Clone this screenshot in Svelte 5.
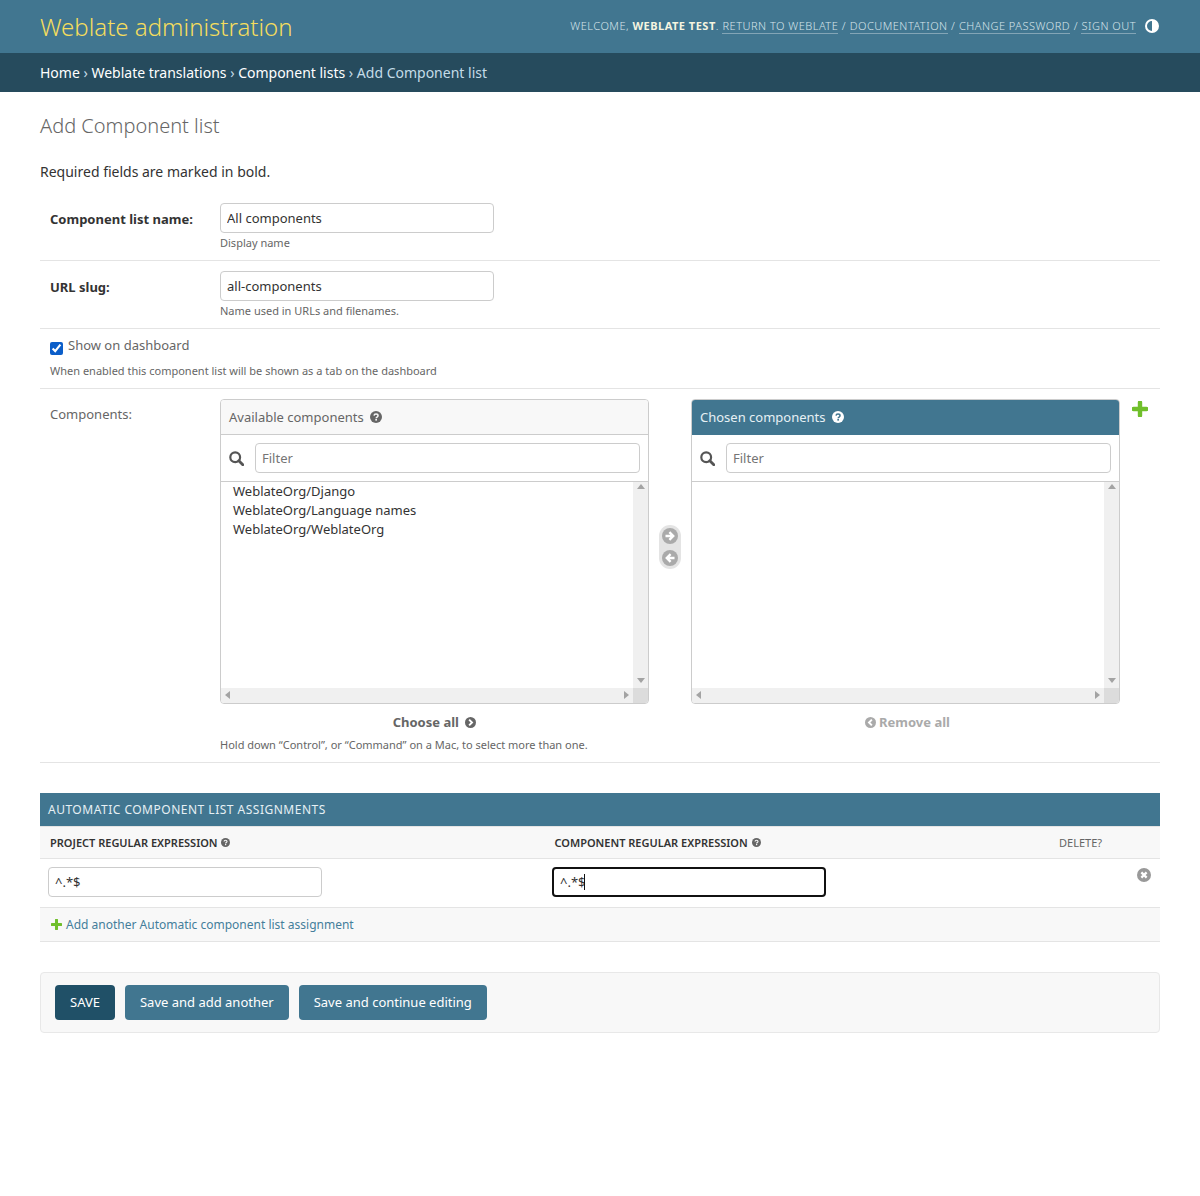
<script>
  const crumbs = ["Home", "Weblate translations", "Component lists"];
  const available = ["WeblateOrg/Django", "WeblateOrg/Language names", "WeblateOrg/WeblateOrg"];
</script>

{#snippet help(size)}
  <svg class="icon" width={size} height={size} viewBox="0 0 16 16">
    <circle cx="8" cy="8" r="8" fill="currentColor" />
    <path d="M5.4 6.2C5.5 4.7 6.6 4 8 4c1.5 0 2.7.8 2.7 2.2 0 1.9-2.4 1.9-2.4 3.4" fill="none" stroke="var(--cut, #fff)" stroke-width="2" />
    <rect x="7.1" y="10.6" width="2.2" height="2.2" fill="var(--cut, #fff)" />
  </svg>
{/snippet}

{#snippet search()}
  <svg class="icon" width="15" height="15" viewBox="0 0 15 15">
    <circle cx="6.2" cy="6.2" r="4.9" fill="none" stroke="#555" stroke-width="2.2" />
    <path d="M9.8 9.8l4 4" stroke="#555" stroke-width="2.8" stroke-linecap="round" />
  </svg>
{/snippet}

{#snippet arrow(dir, size, color)}
  <svg class="icon" width={size} height={size} viewBox="0 0 16 16">
    <circle cx="8" cy="8" r="8" fill={color} />
    {#if dir === "right"}
      <path d="M3.5 8h7M7.4 4.2L11.2 8l-3.8 3.8" fill="none" stroke="#fff" stroke-width="2.4" />
    {:else}
      <path d="M12.5 8h-7M8.6 4.2L4.8 8l3.8 3.8" fill="none" stroke="#fff" stroke-width="2.4" />
    {/if}
  </svg>
{/snippet}

{#snippet chevron(dir, size, color)}
  <svg class="icon" width={size} height={size} viewBox="0 0 16 16">
    <circle cx="8" cy="8" r="8" fill={color} />
    {#if dir === "right"}
      <path d="M6 3.8L10.2 8 6 12.2" fill="none" stroke="#fff" stroke-width="2.8" />
    {:else}
      <path d="M10 3.8L5.8 8l4.2 4.2" fill="none" stroke="#fff" stroke-width="2.8" />
    {/if}
  </svg>
{/snippet}

{#snippet plus(size)}
  <svg class="icon" width={size} height={size} viewBox="0 0 16 16">
    <path d="M8 1.5v13M1.5 8h13" stroke="#70bf2b" stroke-width="4.4" stroke-linecap="round" />
  </svg>
{/snippet}

{#snippet scrollbars()}
  <div class="vbar">
    <span class="tri up"></span>
    <span class="tri down"></span>
  </div>
  <div class="hbar">
    <span class="tri left"></span>
    <span class="tri right"></span>
  </div>
  <div class="corner"></div>
{/snippet}

<header class="top">
  <h1 class="brand">Weblate administration</h1>
  <div class="tools">
    <span>Welcome, <strong>Weblate Test</strong>.</span>
    <a href="#top">Return to Weblate</a> /
    <a href="#top">Documentation</a> /
    <a href="#top">Change password</a> /
    <a href="#top">Sign out</a>
    <svg class="theme" width="14" height="14" viewBox="0 0 14 14">
      <circle cx="7" cy="7" r="6" fill="none" stroke="#fff" stroke-width="2" />
      <path d="M7 1a6 6 0 0 1 0 12z" fill="#fff" />
    </svg>
  </div>
</header>

<nav class="crumbs">
  {#each crumbs as c}
    <a href="#top">{c}</a><span class="sep">{" › "}</span>
  {/each}
  <span>Add Component list</span>
</nav>

<main class="content">
  <h2 class="page-title">Add Component list</h2>
  <p class="note">Required fields are marked in bold.</p>

  <div class="row">
    <label class="label req" for="name">Component list name:</label>
    <div>
      <input id="name" class="text" value="All components" />
      <div class="hint">Display name</div>
    </div>
  </div>

  <div class="row">
    <label class="label req" for="slug">URL slug:</label>
    <div>
      <input id="slug" class="text" value="all-components" />
      <div class="hint">Name used in URLs and filenames.</div>
    </div>
  </div>

  <div class="row check-row">
    <div class="check-line">
      <input type="checkbox" class="check" checked />
      <span>Show on dashboard</span>
    </div>
    <div class="hint">When enabled this component list will be shown as a tab on the dashboard</div>
  </div>

  <div class="row comp-row">
    <div class="label">Components:</div>
    <div class="comp-main">
      <div class="selector">
        <div class="side">
          <div class="box">
            <div class="box-title">Available components {@render help(12)}</div>
            <div class="filter">{@render search()}<input class="text filter-input" placeholder="Filter" /></div>
            <div class="list">
              {#each available as item}
                <div>{item}</div>
              {/each}
              {@render scrollbars()}
            </div>
          </div>
          <div class="all-link">Choose all <span class="gap"></span>{@render chevron("right", 11, "#666")}</div>
        </div>

        <div class="movers">
          {@render arrow("right", 16, "#aaa")}
          {@render arrow("left", 16, "#aaa")}
        </div>

        <div class="side">
          <div class="box chosen">
            <div class="box-title">Chosen components {@render help(12)}</div>
            <div class="filter">{@render search()}<input class="text filter-input" placeholder="Filter" /></div>
            <div class="list">
              {@render scrollbars()}
            </div>
          </div>
          <div class="all-link off">{@render chevron("left", 11, "#aaa")}<span class="gap"></span>Remove all</div>
        </div>

        <div class="add-related">{@render plus(16)}</div>
      </div>
      <div class="hint mt">Hold down “Control”, or “Command” on a Mac, to select more than one.</div>
    </div>
  </div>

  <section class="inline">
    <h2 class="inline-title">Automatic component list assignments</h2>
    <div class="grid head">
      <div class="th">Project regular expression {@render help(9)}</div>
      <div class="th">Component regular expression {@render help(9)}</div>
      <div class="th del">Delete?</div>
    </div>
    <div class="grid body">
      <div><input class="text" value="^.*$" /></div>
      <div class="focus-wrap">
        <input class="text focused" value="^.*$" />
        <span class="caret"></span>
      </div>
      <div class="del-cell">
        <svg class="icon" width="14" height="14" viewBox="0 0 16 16">
          <circle cx="8" cy="8" r="8" fill="#999" />
          <path d="M5 5l6 6M11 5l-6 6" stroke="#fff" stroke-width="2.6" />
        </svg>
      </div>
    </div>
    <div class="add-row">{@render plus(11)}<a href="#top">Add another Automatic component list assignment</a></div>
  </section>

  <div class="submit-row">
    <button class="btn primary">Save</button>
    <button class="btn">Save and add another</button>
    <button class="btn">Save and continue editing</button>
  </div>
</main>

<style>
  :global(body) {
    margin: 0;
    background: #fff;
    color: #333;
    font-family: "Noto Sans", "Open Sans", sans-serif;
    font-size: 14px;
    line-height: 19px;
  }

  a {
    text-decoration: none;
  }

  .icon {
    flex: none;
    vertical-align: -1px;
  }

  .top {
    height: 53px;
    box-sizing: border-box;
    padding: 0 40px;
    background: #417690;
    display: flex;
    align-items: center;
    justify-content: space-between;
  }

  .brand {
    margin: 0;
    font-size: 24px;
    line-height: 30px;
    font-weight: 300;
    color: #f5dd5d;
  }

  .tools {
    font-size: 11px;
    line-height: 14px;
    font-weight: 300;
    letter-spacing: 0.5px;
    text-transform: uppercase;
    color: #d6e4ea;
    display: flex;
    align-items: center;
    gap: 3.5px;
    margin-top: -1px;
  }

  .tools strong {
    color: #f5f5e0;
    font-weight: 700;
  }

  .tools a {
    color: #d6e4ea;
    border-bottom: 1px solid rgba(255, 255, 255, 0.35);
  }

  .theme {
    margin: 0 1px 0 5.5px;
  }

  .crumbs {
    height: 39px;
    box-sizing: border-box;
    padding: 0 40px;
    background: #264b5d;
    color: #c4dce8;
    display: flex;
    align-items: center;
    white-space: pre;
  }

  .crumbs a {
    color: #fff;
  }

  .sep {
    color: #c4dce8;
  }

  .content {
    padding: 20px 40px 0;
  }

  .page-title {
    margin: 0 0 23px;
    padding-top: 1px;
    font-size: 20px;
    line-height: 26px;
    font-weight: 300;
    color: #666;
  }

  .note {
    margin: 0 0 12px;
  }

  .row {
    padding: 10px;
    border-bottom: 1px solid #e4e4e4;
    display: flex;
  }

  .label {
    width: 170px;
    flex: none;
    padding-top: 6px;
    font-size: 13px;
    color: #666;
  }

  .req {
    padding-top: 7px;
    font-weight: 700;
    color: #333;
  }

  .text {
    box-sizing: border-box;
    width: 274px;
    height: 30px;
    margin: 0;
    padding: 0 6px;
    border: 1px solid #ccc;
    border-radius: 4px;
    background: #fff;
    color: #333;
    font: inherit;
    font-size: 13px;
    outline: none;
    display: block;
  }

  .text::placeholder {
    color: #757575;
  }

  .hint {
    margin-top: 2px;
    font-size: 11px;
    line-height: 15px;
    color: #666;
  }

  .check-row {
    display: block;
    padding-top: 7px;
  }

  .check-line {
    display: flex;
    gap: 5px;
    font-size: 13px;
    color: #666;
    height: 23px;
  }

  .check {
    width: 13px;
    height: 13px;
    margin: 6px 0 0;
    accent-color: #0b5ec9;
  }

  .check-row .hint {
    margin-top: 4px;
  }

  .comp-main {
    flex: 1;
    min-width: 0;
  }

  .selector {
    display: flex;
    align-items: flex-start;
  }

  .side {
    width: 429px;
  }

  .box {
    box-sizing: border-box;
    height: 305px;
    border: 1px solid #ccc;
    border-radius: 4px;
    display: flex;
    flex-direction: column;
    overflow: hidden;
  }

  .box-title {
    height: 35px;
    flex: none;
    box-sizing: border-box;
    padding: 0 8px;
    background: #f8f8f8;
    border-bottom: 1px solid #ccc;
    color: #666;
    font-size: 13px;
    display: flex;
    align-items: center;
    gap: 6px;
    --cut: #f8f8f8;
  }

  .chosen .box-title {
    background: #417690;
    border-bottom-color: #417690;
    color: #e6f0f4;
    --cut: #417690;
  }

  .chosen .box-title .icon {
    color: #fff;
  }

  .filter {
    height: 47px;
    flex: none;
    box-sizing: border-box;
    padding: 8px 8px;
    border-bottom: 1px solid #ccc;
    display: flex;
    align-items: center;
    gap: 11px;
  }

  .filter-input {
    flex: 1;
    min-width: 0;
    width: auto;
  }

  .list {
    position: relative;
    flex: 1;
    padding: 0 12px;
    font-size: 13px;
  }

  .vbar {
    position: absolute;
    top: 0;
    right: 0;
    bottom: 15px;
    width: 15px;
    background: #f0f0f0;
  }

  .hbar {
    position: absolute;
    left: 0;
    right: 15px;
    bottom: 0;
    height: 15px;
    background: #f0f0f0;
  }

  .corner {
    position: absolute;
    right: 0;
    bottom: 0;
    width: 15px;
    height: 15px;
    background: #dcdcdc;
  }

  .tri {
    position: absolute;
    width: 0;
    height: 0;
    border: 4px solid transparent;
  }

  .tri.up {
    top: 2px;
    left: 4px;
    border-top: 0;
    border-bottom: 5px solid #a3a3a3;
  }

  .tri.down {
    bottom: 5px;
    left: 4px;
    border-bottom: 0;
    border-top: 5px solid #a3a3a3;
  }

  .tri.left {
    top: 3px;
    left: 4px;
    border-left: 0;
    border-right: 5px solid #a3a3a3;
  }

  .tri.right {
    top: 3px;
    right: 4px;
    border-right: 0;
    border-left: 5px solid #a3a3a3;
  }

  .all-link {
    margin-top: 9px;
    text-align: center;
    font-size: 13px;
    font-weight: 700;
    color: #666;
  }

  .all-link.off {
    padding-left: 4px;
    color: #aaa;
  }

  .gap {
    display: inline-block;
    width: 3px;
  }

  .movers {
    width: 22px;
    box-sizing: border-box;
    margin: 126px 10px 0;
    padding: 3px;
    height: 44px;
    border-radius: 11px;
    background: #e4e4e4;
    display: flex;
    flex-direction: column;
    gap: 6px;
  }

  .add-related {
    margin: 2px 0 0 12px;
    line-height: 16px;
  }

  .mt {
    margin-top: 5px;
  }

  .inline {
    margin-top: 30px;
  }

  .inline-title {
    margin: 0;
    height: 33px;
    box-sizing: border-box;
    padding: 0 8px;
    background: #417690;
    color: #e6f0f4;
    font-size: 12px;
    line-height: 33px;
    font-weight: 400;
    letter-spacing: 0.5px;
    text-transform: uppercase;
  }

  .grid {
    display: grid;
    grid-template-columns: 504.5px 504.5px 1fr;
  }

  .head {
    height: 33px;
    box-sizing: border-box;
    padding: 0 10px;
    background: #f8f8f8;
    border-top: 1px solid #e4e4e4;
    border-bottom: 1px solid #e4e4e4;
    align-items: center;
    --cut: #f8f8f8;
  }

  .th {
    font-size: 11px;
    font-weight: 600;
    color: #333;
    text-transform: uppercase;
    white-space: nowrap;
  }

  .th .icon {
    color: #666;
    margin-left: 1px;
    vertical-align: 0;
  }

  .th.del {
    font-weight: 400;
    color: #666;
  }

  .body {
    height: 49px;
    box-sizing: border-box;
    padding: 8px 8px 0;
    border-bottom: 1px solid #e4e4e4;
    grid-template-columns: 504px 504px 1fr;
  }

  .focus-wrap {
    position: relative;
  }

  .focused {
    border: 2px solid #111;
    padding: 0 6px;
  }

  .caret {
    position: absolute;
    left: 32px;
    top: 7px;
    width: 1px;
    height: 16px;
    background: #111;
  }

  .del-cell {
    display: flex;
    justify-content: flex-end;
    padding: 1px 1px 0 0;
  }

  .add-row {
    height: 34px;
    box-sizing: border-box;
    padding: 0 11px;
    background: #f8f8f8;
    border-bottom: 1px solid #e4e4e4;
    display: flex;
    align-items: center;
    gap: 4px;
    font-size: 12px;
  }

  .add-row a {
    color: #447e9b;
  }

  .submit-row {
    margin-top: 30px;
    height: 61px;
    box-sizing: border-box;
    padding: 12px 14px;
    background: #f8f8f8;
    border: 1px solid #e8e8e8;
    border-radius: 4px;
    display: flex;
    gap: 10px;
  }

  .btn {
    height: 35px;
    padding: 0 15px;
    border: 0;
    border-radius: 4px;
    background: #417690;
    color: #fff;
    font: inherit;
    font-size: 13px;
  }

  .primary {
    background: #205067;
    text-transform: uppercase;
  }
</style>
